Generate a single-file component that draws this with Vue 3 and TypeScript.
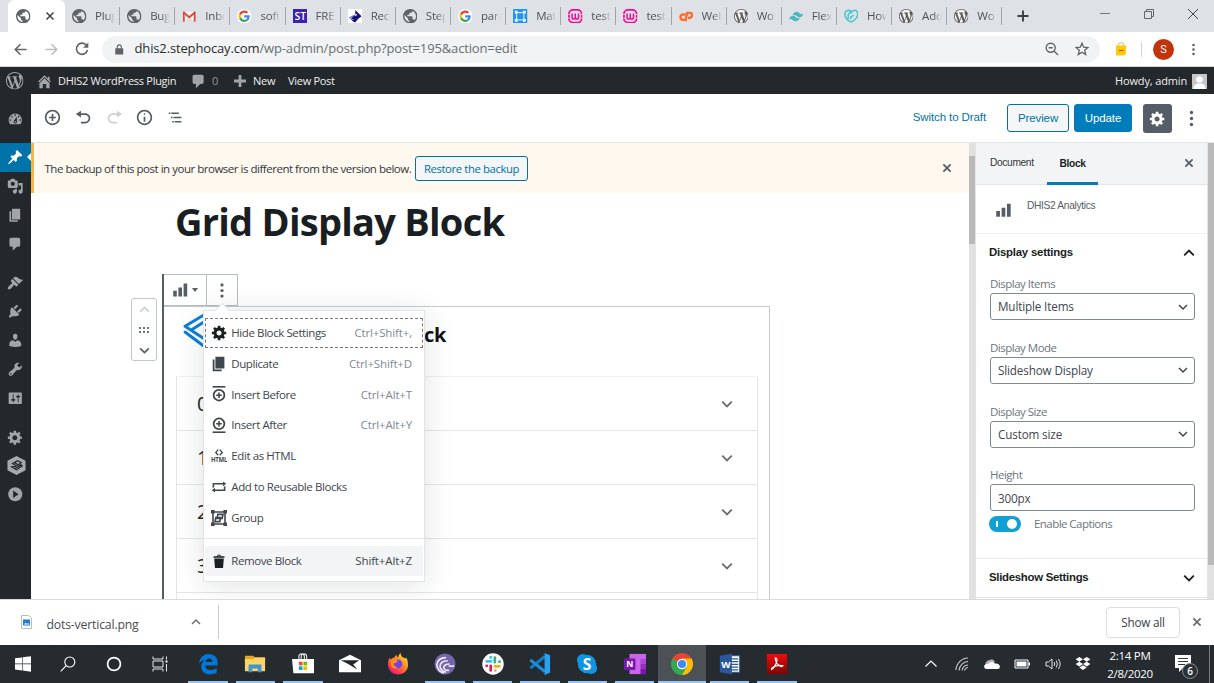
<script setup lang="ts">
interface Tab { icon: string; label: string }
interface MenuItem { icon: string; label: string; keys?: string; state?: string }

const tabs: Tab[] = [
  { icon: 'globe', label: 'Plugins' },
  { icon: 'globe', label: 'Bugs' },
  { icon: 'gmail', label: 'Inbox' },
  { icon: 'google', label: 'software' },
  { icon: 'st', label: 'FRE' },
  { icon: 'rec', label: 'Record' },
  { icon: 'globe', label: 'Stephocay' },
  { icon: 'google', label: 'parallax' },
  { icon: 'frame', label: 'Materials' },
  { icon: 'wamp', label: 'testing' },
  { icon: 'wamp', label: 'testing' },
  { icon: 'cpanel', label: 'Web' },
  { icon: 'wpgrey', label: 'Wo' },
  { icon: 'tailwind', label: 'Flex' },
  { icon: 'godaddy', label: 'How' },
  { icon: 'wpgrey', label: 'Adding' },
  { icon: 'wpgrey', label: 'Wo' },
]

const sideGroups: string[][] = [
  ['dashboard'],
  ['pin', 'media', 'pages', 'comment'],
  ['brush', 'plug', 'user', 'wrench', 'sliders'],
  ['gear', 'hex', 'play'],
]

const menu: MenuItem[] = [
  { icon: 'gear', label: 'Hide Block Settings', keys: 'Ctrl+Shift+,', state: 'focus' },
  { icon: 'pages', label: 'Duplicate', keys: 'Ctrl+Shift+D' },
  { icon: 'before', label: 'Insert Before', keys: 'Ctrl+Alt+T' },
  { icon: 'after', label: 'Insert After', keys: 'Ctrl+Alt+Y' },
  { icon: 'html', label: 'Edit as HTML' },
  { icon: 'repeat', label: 'Add to Reusable Blocks' },
  { icon: 'group', label: 'Group' },
]

const fields = [
  { label: 'Display Items', value: 'Multiple Items', select: true },
  { label: 'Display Mode', value: 'Slideshow Display', select: true },
  { label: 'Display Size', value: 'Custom size', select: true },
  { label: 'Height', value: '300px', select: false },
]

const system = ['windows', 'search', 'cortana', 'taskview']
const apps = [
  { icon: 'edge', open: true }, { icon: 'folder', open: true }, { icon: 'store', open: true },
  { icon: 'mail', open: false }, { icon: 'firefox', open: false }, { icon: 'torrent', open: true },
  { icon: 'slack', open: true }, { icon: 'vscode', open: true }, { icon: 'skype', open: true },
  { icon: 'onenote', open: true }, { icon: 'chrome', open: true }, { icon: 'word', open: true },
  { icon: 'acrobat', open: true },
]
const tray = ['trayup', 'wifi', 'cloud', 'battery', 'volume', 'dropbox']
</script>

<template>
  <svg class="defs" aria-hidden="true">
    <symbol id="i-globe" viewBox="2 2 20 20"><path fill="#5f6368" d="M12 2C6.480 2 2 6.480 2 12s4.480 10 10 10 10-4.480 10-10S17.520 2 12 2zm-1 17.930c-3.950-.49-7-3.850-7-7.930 0-.62.080-1.210.21-1.790L9 15v1c0 1.100.9 2 2 2v1.930zm6.900-2.540c-.26-.81-1-1.390-1.900-1.390h-1v-3c0-.55-.45-1-1-1H8v-2h2c.55 0 1-.45 1-1V7h2c1.100 0 2-.9 2-2v-.41c2.930 1.190 5 4.060 5 7.410 0 2.080-.8 3.970-2.100 5.390z" /></symbol>
    <symbol id="i-gmail" viewBox="0 0 16 16"><path fill="#f6f3f2" d="M1 3h14v11H1z" /><path fill="#e0d9d8" d="M3 14l5-5 5 5z" /><path fill="#d54b3d" d="M1 3h2v11H1.500q-.5 0-.5-.5zM13 3h2v10.500q0 .5-.5.5H13z" /><path fill="none" stroke="#d54b3d" stroke-width="2.200" d="M1.500 3.500L8 9l6.500-5.500" /></symbol>
    <symbol id="i-google" viewBox="0 0 48 48"><circle cx="24" cy="24" r="24" fill="#fff" /><g transform="translate(5 5) scale(.79)"><path fill="#EA4335" d="M24 9.500c3.540 0 6.710 1.220 9.210 3.600l6.850-6.850C35.900 2.380 30.470 0 24 0 14.620 0 6.510 5.380 2.560 13.220l7.980 6.190C12.430 13.720 17.740 9.500 24 9.500z" /><path fill="#4285F4" d="M46.980 24.550c0-1.570-.15-3.090-.38-4.550H24v9.020h12.940c-.58 2.960-2.260 5.480-4.780 7.180l7.730 6c4.510-4.180 7.090-10.360 7.090-17.650z" /><path fill="#FBBC05" d="M10.530 28.590c-.48-1.450-.76-2.990-.76-4.590s.27-3.140.76-4.590l-7.980-6.190C.92 16.460 0 20.120 0 24s.92 7.540 2.560 10.780l7.970-6.190z" /><path fill="#34A853" d="M24 48c6.480 0 11.930-2.130 15.890-5.810l-7.730-6c-2.150 1.450-4.920 2.300-8.160 2.300-6.260 0-11.570-4.220-13.470-9.910l-7.980 6.190C6.510 42.620 14.620 48 24 48z" /></g></symbol>
    <symbol id="i-st" viewBox="0 0 16 16"><path fill="#3c20b4" d="M0 0h16v16H0z" /><text x="8" y="12.200" text-anchor="middle" font-family="Open Sans, sans-serif" font-size="11.500" font-weight="600" fill="#fff">ST</text></symbol>
    <symbol id="i-rec" viewBox="0 0 16 16"><path fill="#fff" d="M0 0h16v16H0z" /><path fill="#14147c" d="M8 1l7 7-4 3-3 4-4-2 3-2-4 1 3-5 2 0z" /><path fill="#7788aa" d="M1 9l5-2-2 3-2 1z" /><path fill="#fff" d="M9 5l1 2-3 1z" /></symbol>
    <symbol id="i-frame" viewBox="0 0 16 16"><rect width="16" height="16" rx="1" fill="#2196f3" /><path fill="none" stroke="#fff" d="M4 3v10M12 3v10M3 4h10M3 12h10" /><path fill="#fff" d="M2 2h3v3H2zM11 2h3v3h-3zM2 11h3v3H2zM11 11h3v3h-3z" /></symbol>
    <symbol id="i-wamp" viewBox="0 0 16 16"><g fill="none" stroke="#f70b95"><rect x="1" y="1" width="14" height="14" rx="4.500" stroke-width="2" /><path stroke-width="1.700" d="M4.500 5v4q0 2 1.800 2T8 9V5v4q0 2 1.800 2t1.800-2V5" /></g><path stroke="#dee1e6" d="M0 6h3M0 10h3M13 6h3M13 10h3" /></symbol>
    <symbol id="i-cpanel" viewBox="0 0 16 16"><g fill="none" stroke="#ff6c2c" stroke-width="2.700"><path d="M7 6H4.500q-2.500 0-2.800 2.800T4.300 12h1.500M7 13.500L9 4.300h3q3 .2 2.500 2.700T11.500 10H10" /></g></symbol>
    <symbol id="i-wp" viewBox="0 0 20 20"><path fill="currentColor" d="M20 10c0-5.510-4.490-10-10-10C4.480 0 0 4.490 0 10c0 5.520 4.480 10 10 10 5.510 0 10-4.480 10-10zM7.780 15.370L4.370 6.220c.55-.02 1.170-.08 1.170-.08.5-.06.44-1.130-.06-1.110 0 0-1.450.11-2.370.11-.18 0-.37 0-.58-.01C4.120 2.690 6.870 1.110 10 1.110c2.330 0 4.450.87 6.050 2.340-.68-.11-1.650.39-1.650 1.580 0 .74.450 1.360.9 2.100.35.610.55 1.360.55 2.460 0 1.490-1.400 5-1.400 5l-3.030-8.370c.54-.02.82-.17.82-.17.5-.05.44-1.250-.06-1.220 0 0-1.440.12-2.380.12-.87 0-2.330-.12-2.330-.12-.5-.03-.56 1.200-.06 1.220l.92.080 1.260 3.410zM17.410 10c.24-.64.74-1.870.43-4.250.7 1.290 1.050 2.710 1.050 4.250 0 3.290-1.730 6.240-4.400 7.780.97-2.590 1.940-5.200 2.920-7.780zM6.100 18.090C3.120 16.650 1.110 13.530 1.110 10c0-1.300.23-2.480.72-3.590C3.250 10.300 4.670 14.200 6.100 18.090zm4.030-6.630l2.580 6.980c-.86.290-1.760.45-2.710.45-.79 0-1.570-.11-2.290-.33.81-2.380 1.620-4.740 2.420-7.100z" /></symbol>
    <symbol id="i-wpgrey" viewBox="0 0 20 20"><circle cx="10" cy="10" r="9.500" fill="#f2f2f2" /><use href="#i-wp" color="#5a5a58" /></symbol>
    <symbol id="i-tailwind" viewBox="0 0 16 16"><path fill="#4bb8bd" d="M4 7q1-4 4.500-4 2 0 3.500 2 1.500 1.500 4 0-1 4-4.500 4-2 0-3.500-1.500T4 7zM0 11.500q1-4 4.500-4 2 0 3.500 2 1.500 1.500 4 0-1 4-4.500 4-2 0-3.500-1.500t-4-.5z" /></symbol>
    <symbol id="i-godaddy" viewBox="0 0 16 16"><g fill="none" stroke="#4cc5cc" stroke-width="1.700"><path d="M8 14.500Q1 11 1 6.500T5 1.500q3 0 3.500 3.500M5 11q-1.500-5 2-7.500t6-2q2.500 1.500 2 5.500T8 14.500M7.500 11V8.500L11 7" /></g></symbol>

    <symbol id="i-dashboard" viewBox="0 0 20 20"><path fill="currentColor" d="M3.760 16h12.480c1.100-1.370 1.760-3.110 1.760-5 0-4.420-3.580-8-8-8s-8 3.580-8 8c0 1.890.66 3.630 1.760 5zM10 4c.55 0 1 .45 1 1s-.45 1-1 1-1-.45-1-1 .45-1 1-1zM6 6c.55 0 1 .45 1 1s-.45 1-1 1-1-.45-1-1 .45-1 1-1zm8 0c.55 0 1 .45 1 1s-.45 1-1 1-1-.45-1-1 .45-1 1-1zm-5.370 5.550L12 7v6c0 1.100-.9 2-2 2s-2-.9-2-2c0-.57.24-1.080.63-1.450zM4 10c.55 0 1 .45 1 1s-.45 1-1 1-1-.45-1-1 .45-1 1-1zm12 0c.55 0 1 .45 1 1s-.45 1-1 1-1-.45-1-1 .45-1 1-1zm-5 3c0-.55-.45-1-1-1s-1 .45-1 1 .45 1 1 1 1-.45 1-1z" /></symbol>
    <symbol id="i-pin" viewBox="0 0 20 20"><path fill="currentColor" d="M10.440 3.020l1.820-1.820 6.360 6.350-1.830 1.820c-1.050-.68-2.480-.57-3.410.36l-.75.75c-.92.930-1.040 2.350-.35 3.410l-1.830 1.820-2.410-2.410-2.800 2.790c-.42.420-3.380 2.710-3.800 2.290s1.860-3.390 2.280-3.810l2.790-2.790L4.100 9.360l1.830-1.820c1.050.69 2.480.57 3.400-.36l.75-.75c.93-.92 1.050-2.350.36-3.410z" /></symbol>
    <symbol id="i-media" viewBox="0 0 20 20"><path fill="currentColor" d="M13 11V4c0-.55-.45-1-1-1h-1.670L9 1H5L3.670 3H2c-.55 0-1 .45-1 1v7c0 .55.450 1 1 1h10c.55 0 1-.45 1-1zM7 4.500c1.380 0 2.500 1.120 2.500 2.500S8.380 9.500 7 9.500 4.500 8.380 4.500 7 5.620 4.500 7 4.500zM14 6h5v10.500c0 1.380-1.120 2.500-2.500 2.500S14 17.880 14 16.500s1.120-2.500 2.500-2.500c.17 0 .34.020.5.050V9h-3V6zm-4 8.050V13h2v3.500c0 1.380-1.120 2.500-2.500 2.500S7 17.880 7 16.500 8.120 14 9.500 14c.17 0 .34.020.5.050z" /></symbol>
    <symbol id="i-pages" viewBox="0 0 20 20"><path fill="currentColor" d="M6 15V2h10v13H6zm-1 1h8v2H3V5h2v11z" /></symbol>
    <symbol id="i-comment" viewBox="0 0 20 20"><path fill="currentColor" d="M5 2h9c1.100 0 2 .9 2 2v7c0 1.100-.9 2-2 2h-2l-5 5v-5H5c-1.100 0-2-.9-2-2V4c0-1.100.9-2 2-2z" /></symbol>
    <symbol id="i-brush" viewBox="0 0 20 20"><path fill="currentColor" d="M14.480 11.060L7.410 3.990l1.500-1.500c.5-.56 2.300-.47 3.510.32 1.210.8 1.430 1.280 2.910 2.100 1.180.64 2.450 1.260 4.450.85zm-.71.710L6.700 4.700 4.930 6.470c-.39.390-.39 1.020 0 1.410l1.060 1.060c.39.390.39 1.030 0 1.420-.6.600-1.430 1.110-2.210 1.690-.35.260-.7.530-1.010.84C1.430 14.230.4 16.080 1.400 17.070c.99 1 2.840-.03 4.180-1.360.31-.31.58-.66.85-1.020.57-.78 1.080-1.610 1.690-2.210.39-.39 1.020-.39 1.410 0l1.060 1.060c.39.390 1.020.39 1.410 0z" /></symbol>
    <symbol id="i-plug" viewBox="0 0 20 20"><path fill="currentColor" d="M13.110 4.360L9.870 7.600 8 5.730l3.240-3.240c.35-.34 1.050-.2 1.560.32.52.51.66 1.210.31 1.550zm-8 1.770l.91-1.120 9.010 9.010-1.190.84c-.71.710-2.630 1.160-3.820 1.160H6.140L4.900 17.260c-.59.590-1.540.59-2.120 0-.59-.58-.59-1.530 0-2.120l1.240-1.240v-3.880c0-1.130.4-3.190 1.090-3.890zm7.260 3.970l3.240-3.240c.34-.35 1.040-.21 1.550.31.52.51.66 1.210.31 1.550l-3.240 3.250z" /></symbol>
    <symbol id="i-user" viewBox="0 0 20 20"><path fill="currentColor" d="M10 9.250c-2.270 0-2.730-3.440-2.730-3.440C7 4.020 7.820 2 9.970 2c2.160 0 2.980 2.020 2.710 3.810 0 0-.41 3.440-2.680 3.440zm0 2.570L12.720 10c2.390 0 4.520 2.330 4.520 4.530v2.490s-3.650 1.130-7.240 1.130c-3.650 0-7.240-1.130-7.240-1.130v-2.490c0-2.250 1.940-4.480 4.470-4.480z" /></symbol>
    <symbol id="i-wrench" viewBox="0 0 20 20"><path fill="currentColor" d="M16.680 9.770c-1.340 1.340-3.300 1.670-4.950.99l-5.410 6.520c-.99.990-2.590.99-3.580 0s-.99-2.590 0-3.570l6.520-5.420c-.68-1.650-.35-3.610.99-4.950 1.280-1.280 3.120-1.620 4.720-1.060l-2.890 2.890 2.820 2.820 2.860-2.870c.53 1.580.18 3.390-1.080 4.650zM3.810 16.210c.4.390 1.040.39 1.430 0 .4-.4.4-1.040 0-1.430-.39-.4-1.030-.4-1.430 0-.39.390-.39 1.030 0 1.430z" /></symbol>
    <symbol id="i-sliders" viewBox="0 0 20 20"><path fill="currentColor" d="M18 16V4c0-.55-.45-1-1-1H3c-.55 0-1 .45-1 1v12c0 .55.450 1 1 1h14c.55 0 1-.45 1-1zM8 11h1c.55 0 1 .45 1 1s-.45 1-1 1H8v1.500c0 .28-.22.500-.5.500s-.5-.22-.5-.5V13H6c-.55 0-1-.45-1-1s.45-1 1-1h1V5.500c0-.28.22-.5.5-.5s.5.220.5.500V11zm5-2h-1c-.55 0-1-.45-1-1s.45-1 1-1h1V5.500c0-.28.22-.5.5-.5s.5.220.5.500V7h1c.55 0 1 .45 1 1s-.45 1-1 1h-1v5.500c0 .28-.22.500-.5.500s-.5-.22-.5-.5V9z" /></symbol>
    <symbol id="i-gear" viewBox="0 0 20 20"><path fill="currentColor" d="M18 12h-2.180c-.17.700-.44 1.350-.81 1.930l1.540 1.540-2.100 2.100-1.540-1.540c-.58.360-1.230.63-1.910.79V19H8v-2.180c-.68-.16-1.330-.43-1.910-.79l-1.540 1.540-2.120-2.120 1.540-1.540c-.36-.58-.63-1.230-.79-1.910H1V9.030h2.170c.16-.7.44-1.350.8-1.940L2.430 5.550l2.100-2.100 1.540 1.540c.58-.37 1.240-.64 1.930-.81V2h3v2.180c.68.160 1.330.43 1.910.79l1.540-1.540 2.120 2.120-1.540 1.540c.36.590.64 1.240.8 1.940H18V12zm-8.500 1.500c1.660 0 3-1.340 3-3s-1.340-3-3-3-3 1.340-3 3 1.340 3 3 3z" /></symbol>
    <symbol id="i-hex" viewBox="0 0 20 20"><path fill="#a7aaad" d="M10 0l9.500 5v10L10 20 .5 15V5z" /><path fill="none" stroke="#23282d" stroke-width="1.300" d="M5 8.500l6-3.500 4 2-6 4-4 .5 5 3 6-4-2-2M6 8l4 2.500M8 7l5 3M8 13.500l7-4" /></symbol>
    <symbol id="i-play" viewBox="0 0 20 20"><circle cx="10" cy="10" r="8.500" fill="currentColor" /><path fill="#23282d" d="M7.500 5.500l6.500 4.500-6.500 4.500z" /></symbol>
    <symbol id="i-home" viewBox="0 0 20 20"><path fill="currentColor" d="M16 8.500l1.530 1.530-1.060 1.060L10 4.600l-6.470 6.490-1.060-1.060L10 2.500l4 4v-2h2v4zm-6-2.460l6 5.990V18h-4v-5H8v5H4v-5.970z" /></symbol>
    <symbol id="i-insert" viewBox="0 0 20 20"><path fill="currentColor" d="M10 1c-5 0-9 4-9 9s4 9 9 9 9-4 9-9-4-9-9-9zm0 16c-3.900 0-7-3.100-7-7s3.100-7 7-7 7 3.100 7 7-3.100 7-7 7zm1-11H9v3H6v2h3v3h2v-3h3V9h-3V6z" /></symbol>
    <symbol id="i-undo" viewBox="0 0 20 20"><path fill="currentColor" d="M12 5H7V2L1 6l6 4V7h5c2.200 0 4 1.800 4 4s-1.800 4-4 4H7v2h5c3.300 0 6-2.700 6-6s-2.700-6-6-6z" /></symbol>
    <symbol id="i-redo" viewBox="0 0 20 20"><path fill="currentColor" d="M8 5h5V2l6 4-6 4V7H8c-2.200 0-4 1.800-4 4s1.800 4 4 4h5v2H8c-3.300 0-6-2.700-6-6s2.700-6 6-6z" /></symbol>
    <symbol id="i-info" viewBox="0 0 20 20"><path fill="currentColor" d="M9 15h2V9H9v6zm1-10c-.5 0-1 .5-1 1s.5 1 1 1 1-.5 1-1-.5-1-1-1zm0-4c-5 0-9 4-9 9s4 9 9 9 9-4 9-9-4-9-9-9zm0 16c-3.900 0-7-3.100-7-7s3.100-7 7-7 7 3.100 7 7-3.100 7-7 7z" /></symbol>
    <symbol id="i-list" viewBox="0 0 20 20"><path fill="currentColor" d="M2 4h2v2H2zM5 4h9v2H5zM4.500 9h2v2h-2zM7.500 9H17v2H7.500zM6 14h2v2H6zM9 14h8v2H9z" /></symbol>
    <symbol id="i-before" viewBox="0 0 20 20"><path fill="currentColor" d="M2 0h16v2H2z" /><circle cx="10" cy="11.500" r="6.700" fill="none" stroke="currentColor" stroke-width="2.200" /><path fill="currentColor" d="M9 8h2v7H9zM6.500 10.500h7v2h-7z" /></symbol>
    <symbol id="i-after" viewBox="0 0 20 20"><path fill="currentColor" d="M2 18h16v2H2z" /><circle cx="10" cy="8.500" r="6.700" fill="none" stroke="currentColor" stroke-width="2.200" /><path fill="currentColor" d="M9 5h2v7H9zM6.500 7.500h7v2h-7z" /></symbol>
    <symbol id="i-html" viewBox="0 0 20 20"><path fill="none" stroke="currentColor" stroke-width="1.700" d="M9 2L6 5.500 9 9M11 2l3 3.500L11 9" /><text x="10" y="18" text-anchor="middle" textLength="20" lengthAdjust="spacingAndGlyphs" font-family="Open Sans, sans-serif" font-size="8.500" font-weight="700" fill="currentColor">HTML</text></symbol>
    <symbol id="i-repeat" viewBox="0 0 20 20"><path fill="currentColor" d="M4 7v3l-2 1.500V5h13V3l4 3-4 3V7zM16 13v-3l2-1.500V15H5v2l-4-3 4-3v2z" /></symbol>
    <symbol id="i-group" viewBox="0 0 20 20"><g fill="none" stroke="currentColor"><path stroke-width="2" d="M2.500 2.500h15v15h-15z" /><path stroke-width="2" d="M8.500 5.500h6.500l-1 5H7.500zM6 9.500h6l-1 5H5z" /></g><path fill="currentColor" d="M0 0h4.500v4.500H0zM15.500 0H20v4.500h-4.500zM0 15.500h4.500V20H0zM15.500 15.500H20V20h-4.500z" /></symbol>
    <symbol id="i-trash" viewBox="0 0 20 20"><path fill="currentColor" d="M12.500 4h3.500c.6 0 1 .4 1 1v1H3V5c0-.6.5-1 1-1h3.500c.2-1.100 1.300-2 2.500-2s2.300.9 2.500 2zM8.500 4h3c-.2-.6-.9-1-1.500-1s-1.300.4-1.500 1zM4 7h12l-.9 11c0 .5-.5.9-1 .9H5.900c-.5 0-.9-.4-1-.9z" /></symbol>
    <symbol id="i-bars" viewBox="0 0 20 20"><path fill="currentColor" d="M1.500 11H6v7H1.500zM8 7h4.500v11H8zM14.500 2H19v16h-4.500z" /></symbol>
    <symbol id="i-dots" viewBox="0 0 20 20"><g fill="currentColor"><circle cx="10" cy="3" r="2" /><circle cx="10" cy="10" r="2" /><circle cx="10" cy="17" r="2" /></g></symbol>
    <symbol id="i-x" viewBox="0 0 20 20"><path fill="none" stroke="currentColor" stroke-width="3" d="M4 4l12 12M16 4L4 16" /></symbol>
    <symbol id="i-xthin" viewBox="0 0 20 20"><path fill="none" stroke="currentColor" stroke-width="3" d="M3 3l14 14M17 3L3 17" /></symbol>
    <symbol id="i-down" viewBox="0 0 20 20"><path fill="none" stroke="currentColor" stroke-width="3" d="M2 6l8 8 8-8" /></symbol>
    <symbol id="i-up" viewBox="0 0 20 20"><path fill="none" stroke="currentColor" stroke-width="3" d="M2 14l8-8 8 8" /></symbol>

    <symbol id="i-windows" viewBox="0 0 16 16"><path fill="#fff" d="M0 2.300l7-.9v6.200H0zM7.600 1.300L16 .2v7.400H7.600zM0 8.300h7v6.200l-7-.9zM7.600 8.300H16v7.500l-8.400-1.200z" /></symbol>
    <symbol id="i-search" viewBox="0 0 16 16"><path fill="none" stroke="#fff" stroke-width="1.100" d="M6.200 9.700L.7 15.300" /><circle cx="9.800" cy="6" r="5" fill="none" stroke="#fff" stroke-width="1.100" /></symbol>
    <symbol id="i-cortana" viewBox="0 0 16 16"><circle cx="8" cy="8" r="6.400" fill="none" stroke="#fff" stroke-width="1.700" /></symbol>
    <symbol id="i-taskview" viewBox="0 0 16 16"><g fill="none" stroke="#e8e8e8" stroke-width="1"><path d="M1 .5v2.500h10V.5M1 15.500V13h10v2.500M1 5h10v6H1zM14.500 .5v3M14.500 8v7.500" /></g><path fill="#fff" d="M13.500 4.500h2v2h-2z" /></symbol>
    <symbol id="i-edge" viewBox="0 0 24 24"><path fill="#0078d7" d="M2 11Q4 1 13 1q9.500.5 9.500 9.500v3H9q.5 5 6 5 3.500 0 6.500-2v5Q18 23.500 14 23.500 5 23 4.500 15 4.700 10 9 7.500 5 8 2 11zm7.300-1.300H17Q16.500 6 13 6q-3 .3-3.700 3.700z" /></symbol>
    <symbol id="i-folder" viewBox="0 0 24 24"><path fill="#e6a522" d="M1 3h9l2 2h11v4H1z" /><path fill="#ffd466" d="M1 6.500h9L12 5h11v15H1z" /><path fill="#3f96d5" d="M5 12.500h14V21h-4v-4H9v4H5z" /></symbol>
    <symbol id="i-store" viewBox="0 0 24 24"><path fill="none" stroke="#ddd" stroke-width="1.300" d="M7.500 7V4q0-3 3-3t3 3v3M10 7V4q0-3 3-3t3 3v3" /><path fill="#fff" d="M0 6.500h24V22H1.500z" /><path fill="#f25022" d="M7.500 9.500h4v4h-4z" /><path fill="#7fba00" d="M12.500 9.500h4v4h-4z" /><path fill="#00a4ef" d="M7.500 14.500h4v4h-4z" /><path fill="#ffb900" d="M12.500 14.500h4v4h-4z" /></symbol>
    <symbol id="i-mail" viewBox="0 0 24 24"><path fill="#fff" d="M0 8l12-6 12 6v13H0z" /><path fill="#20262a" d="M2 8h20l-6.500 4.500L20 18 9.500 11.700z" /></symbol>
    <symbol id="i-firefox" viewBox="0 0 24 24"><defs><linearGradient id="ffg" x1="1" y1="0" x2=".2" y2="1"><stop offset="0" stop-color="#fff04a" /><stop offset=".4" stop-color="#ff9a1f" /><stop offset=".8" stop-color="#ff3653" /><stop offset="1" stop-color="#e3138b" /></linearGradient></defs><path fill="url(#ffg)" d="M3 5l1 2q2-2 4-2l2-3q.5 2 2 3l1-3 2-2q0 4 3 5l2 1 1-1q2.500 4 2 9-1 9-11 9.500Q2 22.500 1 13 .8 8 3 5z" /><circle cx="12" cy="12" r="4.800" fill="#7542e5" /><path fill="#ff8f1c" d="M4 8l4-1.500 4 2-2 2-3 1q1 4 5 4.500-5 2.500-8-2z" /></symbol>
    <symbol id="i-torrent" viewBox="0 0 24 24"><circle cx="12" cy="12" r="11.500" fill="#7566ac" /><g fill="none" stroke="#eeeaf8" stroke-width="1.800"><path d="M13 5Q4 5 3 13q1 7 8 9M15 8.500q-8 0-8.500 6 .5 5 7 6.500M17 12q-6 0-6.500 4 1 3 6 3M22 14q-3 1-6 0" /></g></symbol>
    <symbol id="i-slack" viewBox="0 0 24 24"><circle cx="12" cy="12" r="11.700" fill="#fff" /><g fill="none" stroke-width="3" stroke-linecap="round"><path stroke="#36c5f0" d="M5 9h5M9.500 4.500V5" /><path stroke="#2eb67d" d="M14 5v5M19 9.500h.2" /><path stroke="#ecb22e" d="M14 14.500h5M14.500 19v.2" /><path stroke="#e01e5a" d="M9.500 14v5M5 14h.2" /></g></symbol>
    <symbol id="i-vscode" viewBox="0 0 24 24"><path fill="none" stroke="#1579c0" stroke-width="3.500" d="M1.500 16.500L17.500 3.500" /><path fill="none" stroke="#1c8ddb" stroke-width="3.500" d="M1.500 7.500l16 13" /><path fill="#29a1ee" d="M17 0l6 2.500v19L17 24z" /></symbol>
    <symbol id="i-skype" viewBox="0 0 24 24"><g fill="#0f95e2"><circle cx="12" cy="12" r="10" /><circle cx="7.500" cy="7.500" r="6.500" /><circle cx="16.500" cy="16.500" r="6.500" /></g><text x="12" y="18" text-anchor="middle" font-family="Open Sans, sans-serif" font-size="17" font-weight="700" fill="#fff">S</text></symbol>
    <symbol id="i-onenote" viewBox="0 0 24 24"><path fill="#ca64ea" d="M6 1h18v22H6z" /><path fill="#ae4bd5" d="M18 6.500h6V12h-6z" /><path fill="#9332bf" d="M18 12h6v5.500h-6z" /><path fill="#7719aa" d="M18 17.500h6V23h-6z" /><rect y="6" width="12.500" height="12.500" rx="1" fill="#7719aa" /><text x="6.200" y="15.700" text-anchor="middle" font-family="Open Sans, sans-serif" font-size="9.500" font-weight="700" fill="#fff">N</text></symbol>
    <symbol id="i-chrome" viewBox="0 0 24 24"><path fill="#ea4335" d="M12 12L1.600 6A12 12 0 0 1 22.400 6z" /><path fill="#fbbc05" d="M12 12V6h10.400A12 12 0 0 1 12 24z" /><path fill="#34a853" d="M1.600 6A12 12 0 0 0 12 24l5.200-9H12z" /><path fill="#ea4335" d="M1.600 6L12 6v6l-5.200 3z" /><path fill="#34a853" d="M1.600 6l5.200 9 5.200-3z" /><circle cx="12" cy="12" r="5.600" fill="#fff" /><circle cx="12" cy="12" r="4.400" fill="#4285f4" /></symbol>
    <symbol id="i-word" viewBox="0 0 24 24"><path fill="#fff" stroke="#2b579a" d="M12 3h10.500v18H12z" /><path stroke="#2b579a" stroke-width="1.400" d="M13 6.500h8M13 9.500h8M13 12.500h8M13 15.500h8M13 18.500h8" /><path fill="#2b579a" d="M1 3l13-2.500v23L1 21z" /><text x="7.500" y="16" text-anchor="middle" font-family="Open Sans, sans-serif" font-size="10.500" font-weight="700" fill="#fff">W</text></symbol>
    <symbol id="i-acrobat" viewBox="0 0 24 24"><defs><linearGradient id="acg" x1="0" y1="0" x2="0" y2="1"><stop offset="0" stop-color="#f20a0a" /><stop offset="1" stop-color="#7d0505" /></linearGradient></defs><path fill="url(#acg)" d="M1 1h22v22H1z" /><path fill="none" stroke="#fff" stroke-width="1.300" d="M11 5.500q2 1 0 6T6 18q-.5-2 4-3.500t8.500-.5q-1 2-4.500-.5t-4-8z" /></symbol>

    <symbol id="i-trayup" viewBox="0 0 16 16"><path fill="none" stroke="#fff" stroke-width="1.200" d="M2.500 10.500L8 5l5.500 5.500" /></symbol>
    <symbol id="i-wifi" viewBox="0 0 16 16"><g fill="none" stroke="#c9cbcc" stroke-width="1.100"><path d="M2 14A12.500 12.500 0 0 1 14 2M5 14.500A9.500 9.500 0 0 1 14 5.500M8 14.500A6.500 6.500 0 0 1 14 9M10.500 14.500Q11 12 14 11.500" /></g></symbol>
    <symbol id="i-cloud" viewBox="0 0 16 16"><path fill="#aeb1b3" d="M1 9q1-5 5-5 3-2 5 2l-3 2z" /><path fill="#fff" d="M2 13q-2-.5-2-3Q1 7.500 4 8q3-3.500 7-.5 4-.5 5 3 0 2-2 2.500z" /></symbol>
    <symbol id="i-battery" viewBox="0 0 16 16"><path fill="#fff" d="M2.500 5.500h10v5h-10z" /><path fill="none" stroke="#fff" d="M1 4h13v8H1z" /><path fill="#fff" d="M14.500 6.500H16v3h-1.500z" /></symbol>
    <symbol id="i-volume" viewBox="0 0 16 16"><g fill="none" stroke="#e4e5e6" stroke-width="1"><path d="M1 6h2.500L7 3v10l-3.500-3H1zM9 6q1.500 2 0 4M11.200 4.500q2.500 3.500 0 7M13.400 3q3.500 5 0 10" /></g></symbol>
    <symbol id="i-dropbox" viewBox="0 0 16 16"><path fill="#fff" d="M4.300 1l3.700 2.300-3.700 2.400L.6 3.300zM11.700 1l3.700 2.300-3.700 2.400L8 3.300zM.6 8l3.700-2.300L8 8l-3.700 2.400zM11.700 5.700L15.400 8l-3.700 2.400L8 8zM4.300 11.600L8 9.300l3.700 2.300L8 14z" /></symbol>
  </svg>

  <div class="screen">
    <header class="tabs">
      <div class="tab-active">
        <svg class="fav"><use href="#i-globe" /></svg>
        <svg class="tab-x"><use href="#i-xthin" /></svg>
      </div>
      <div v-for="(t, i) in tabs" :key="i" class="tab">
        <svg class="fav"><use :href="'#i-' + t.icon" /></svg>
        <span class="tab-label">{{ t.label }}</span>
      </div>
      <svg class="newtab" viewBox="0 0 12 12"><path d="M6 .5v11M.5 6h11" stroke="#3c4043" stroke-width="1.900" /></svg>
      <div class="winbtns">
        <svg viewBox="0 0 12 12"><path d="M1 5.500h10" stroke="#777" fill="none" /></svg>
        <svg viewBox="0 0 12 12"><path d="M1.500 3.500h7v7h-7zM3.500 3.500v-2h7v7h-2" stroke="#666" fill="none" /></svg>
        <svg viewBox="0 0 12 12"><path d="M1 1l10 10M11 1L1 11" stroke="#444" fill="none" /></svg>
      </div>
    </header>

    <div class="toolbar">
      <svg class="nav back" viewBox="0 0 14 14"><path d="M13.500 7H1.500M7 1.300L1.300 7 7 12.700" /></svg>
      <svg class="nav fwd" viewBox="0 0 14 14"><path d="M.5 7h12M7 1.300L12.700 7 7 12.700" /></svg>
      <svg class="nav reload" viewBox="0 0 14 14"><path d="M11.500 3.300A5.600 5.600 0 1 0 12.500 8" /><path class="solid" d="M13.300.6v5.200H8.100z" /></svg>
      <div class="omnibox">
        <svg class="lock" viewBox="0 0 10 12"><path fill="#5f6368" d="M1 4.500h8q.7 0 .7.700v6q0 .7-.7.700H1q-.7 0-.7-.7v-6q0-.7.700-.7z" /><path fill="none" stroke="#5f6368" stroke-width="1.300" d="M2.600 5V3a2.400 2.400 0 0 1 4.800 0v2" /></svg>
        <span class="url"><b>dhis2.stephocay.com</b>/wp-admin/post.php?post=195&amp;action=edit</span>
        <svg class="omni-ic" viewBox="0 0 14 14"><g fill="none" stroke="#5f6368" stroke-width="1.400"><circle cx="5.700" cy="5.700" r="4.500" /><path d="M9 9l4 4M3.700 5.700h4" /></g></svg>
        <svg class="omni-ic" viewBox="0 0 14 14"><path fill="none" stroke="#5f6368" stroke-width="1.300" d="M7 1.200l1.700 4 4.300.3-3.300 2.800 1 4.200L7 10.200l-3.700 2.300 1-4.200L1 5.500l4.300-.3z" /></svg>
      </div>
      <svg class="bag" viewBox="0 0 12 14"><path fill="none" stroke="#d8c27a" d="M3 4q0-3.500 3-3.500T9 4" /><path fill="#fbcb0a" d="M1 3.500h10v8L9 13.500H1z" /><path stroke="#e0402a" stroke-width="1.200" d="M4 8.500h4.500" /></svg>
      <span class="tb-sep"></span>
      <span class="profile">S</span>
      <svg class="kebab"><use href="#i-dots" /></svg>
    </div>

    <div class="adminbar">
      <svg class="ab-wp"><use href="#i-wp" /></svg>
      <svg class="ab-home"><use href="#i-home" /></svg>
      <span class="ab-site">DHIS2 WordPress Plugin</span>
      <svg class="ab-com"><use href="#i-comment" /></svg>
      <span class="ab-zero">0</span>
      <svg class="ab-plus" viewBox="0 0 12 12"><path d="M6 0v12M0 6h12" stroke="#a0a5aa" stroke-width="2.800" /></svg>
      <span class="ab-new">New</span>
      <span class="ab-view">View Post</span>
      <span class="ab-user">Howdy, admin</span>
      <svg class="ab-avatar" viewBox="0 0 15 15"><path fill="#c6c6c6" d="M0 0h15v15H0z" /><circle cx="7.500" cy="5.500" r="3.300" fill="#fff" /><path fill="#fff" d="M1.500 15q0-5 4-5.500h4q4 .5 4 5.500z" /></svg>
    </div>

    <div class="workspace">
      <nav class="side">
        <div v-for="(g, gi) in sideGroups" :key="gi" class="side-group">
          <span v-for="n in g" :key="n" class="side-item" :class="[n, { on: n === 'pin' }]">
            <svg><use :href="'#i-' + n" /></svg>
          </span>
        </div>
      </nav>

      <div class="editor">
        <div class="ed-head">
          <svg class="h-ic"><use href="#i-insert" /></svg>
          <svg class="h-ic"><use href="#i-undo" /></svg>
          <svg class="h-ic dim"><use href="#i-redo" /></svg>
          <svg class="h-ic"><use href="#i-info" /></svg>
          <svg class="h-ic"><use href="#i-list" /></svg>
          <span class="draft">Switch to Draft</span>
          <span class="btn preview">Preview</span>
          <span class="btn update">Update</span>
          <span class="gearbtn"><svg><use href="#i-gear" /></svg></span>
          <svg class="h-dots"><use href="#i-dots" /></svg>
        </div>

        <div class="ed-body">
          <main class="canvas">
            <div class="notice">
              <span class="notice-text">The backup of this post in your browser is different from the version below.</span>
              <span class="restore">Restore the backup</span>
              <svg class="notice-x"><use href="#i-x" /></svg>
            </div>
            <h1 class="title">Grid Display Block</h1>

            <section class="block">
              <div class="mover">
                <svg class="mv-up"><use href="#i-up" /></svg>
                <svg class="mv-grip" viewBox="0 0 10 6"><g fill="#6c7781"><path d="M0 0h2v2H0zM4 0h2v2H4zM8 0h2v2H8zM0 4h2v2H0zM4 4h2v2H4zM8 4h2v2H8z" /></g></svg>
                <svg class="mv-down"><use href="#i-down" /></svg>
              </div>
              <div class="b-tools">
                <span class="b-type"><svg class="b-bars"><use href="#i-bars" /></svg><i class="caret"></i></span>
                <span class="b-more"><svg><use href="#i-dots" /></svg></span>
              </div>
              <div class="b-box">
                <div class="b-head">
                  <svg class="b-logo" viewBox="0 0 40 34"><g fill="none" stroke="#0a80d8" stroke-width="2.900" stroke-linejoin="round" stroke-linecap="round"><path d="M20 1.500L2 12.300 20 24l18-11.700zM9.500 15.200L20 8.500l10.500 6.700M2 18l18 13.500L38 18" /></g></svg>
                  <strong class="b-title">Grid Display Block</strong>
                </div>
                <div class="acc">
                  <div v-for="n in 5" :key="n" class="acc-row">
                    <span>{{ n - 1 }}</span>
                    <svg><use href="#i-down" /></svg>
                  </div>
                </div>
              </div>

              <div class="menu">
                <div v-for="m in menu" :key="m.label" class="m-item" :class="m.state">
                  <svg :class="'mi-' + m.icon"><use :href="'#i-' + m.icon" /></svg>
                  <span>{{ m.label }}</span>
                  <kbd v-if="m.keys">{{ m.keys }}</kbd>
                </div>
                <div class="m-rule"></div>
                <div class="m-item hover">
                  <svg><use href="#i-trash" /></svg>
                  <span>Remove Block</span>
                  <kbd>Shift+Alt+Z</kbd>
                </div>
              </div>
            </section>
          </main>

          <div class="scroll main-scroll"><i></i></div>

          <aside class="panel">
            <div class="p-tabs">
              <span class="p-doc">Document</span>
              <span class="p-block">Block</span>
              <svg class="p-x"><use href="#i-x" /></svg>
            </div>
            <div class="p-card">
              <svg><use href="#i-bars" /></svg>
              <span>DHIS2 Analytics</span>
            </div>
            <div class="p-settings">
              <div class="p-title"><span>Display settings</span><svg><use href="#i-up" /></svg></div>
              <div v-for="f in fields" :key="f.label" class="field">
                <label>{{ f.label }}</label>
                <div class="ctl"><span>{{ f.value }}</span><svg v-if="f.select"><use href="#i-down" /></svg></div>
              </div>
              <div class="toggle-row">
                <span class="toggle"><i></i><b></b></span>
                <span class="t-label">Enable Captions</span>
              </div>
            </div>
            <div class="p-title last"><span>Slideshow Settings</span><svg><use href="#i-down" /></svg></div>
          </aside>

          <div class="scroll page-scroll"><i></i></div>
        </div>
      </div>
    </div>

    <div class="downloads">
      <svg class="d-file" viewBox="0 0 11 14"><path fill="#fff" stroke="#aaa" stroke-width=".8" d="M.5.500h7L10.500 3v10.500H.5z" /><path fill="#1e7bd0" d="M2 4.500h7v6H2z" /><path fill="#fff" d="M3 9.500l1.500-2L6 9l1-1 1.500 1.500z" /></svg>
      <span class="d-name">dots-vertical.png</span>
      <svg class="d-up"><use href="#i-up" /></svg>
      <span class="d-sep"></span>
      <span class="d-show">Show all</span>
      <svg class="d-x"><use href="#i-x" /></svg>
    </div>

    <footer class="taskbar">
      <span v-for="s in system" :key="s" class="t-sys"><svg><use :href="'#i-' + s" /></svg></span>
      <div class="t-apps">
        <span v-for="a in apps" :key="a.icon" class="t-app" :class="{ open: a.open, cur: a.icon === 'chrome' }"><svg><use :href="'#i-' + a.icon" /></svg></span>
      </div>
      <div class="tray">
        <span v-for="s in tray" :key="s"><svg><use :href="'#i-' + s" /></svg></span>
      </div>
      <div class="clock"><span>2:14 PM</span><span>2/8/2020</span></div>
      <div class="notif">
        <svg viewBox="0 0 24 26"><path fill="#fff" d="M0 1h16v13H8l-4 4v-4H0z" /><path stroke="#333a3e" stroke-width="1.200" d="M3 4.500h10M3 7.500h10M3 10.500h7" /><circle cx="15" cy="17" r="7.500" fill="#2b3135" stroke="#888d90" /></svg>
        <span class="count">6</span>
      </div>
      <span class="peek"></span>
    </footer>
  </div>
</template>

<style>
html, body { margin: 0; background: #fff; overflow: hidden; }
</style>

<style scoped>
* { box-sizing: border-box; }
.defs { position: absolute; width: 0; height: 0; }
svg { display: block; flex: none; }
.screen { width: 1214px; height: 683px; display: flex; flex-direction: column; overflow: hidden; font: 11.500px/1.2 "Open Sans", "Noto Sans", sans-serif; color: #32373c; background: #fff; white-space: nowrap; }

.tabs { height: 32px; background: #dee1e6; display: flex; align-items: center; flex: none; }
.tab-active { width: 57px; height: 32px; margin-left: 8px; background: #fff; border-radius: 6px 6px 0 0; display: flex; align-items: center; padding-left: 8px; }
.fav { width: 14.500px; height: 14.500px; }
.tab-x { width: 10px; height: 10px; margin-left: 14px; color: #3c4043; }
.tab { width: 55.150px; height: 18px; border-right: 1.500px solid #a2a5a9; display: flex; align-items: center; padding-left: 7px; }
.tab-label { margin-left: 8.500px; width: 20px; overflow: hidden; font-size: 11.500px; letter-spacing: -.2px; color: #50545a; -webkit-mask-image: linear-gradient(90deg, #000 55%, transparent); mask-image: linear-gradient(90deg, #000 55%, transparent); }
.newtab { width: 12px; height: 12px; margin-left: 15px; }
.winbtns { display: flex; gap: 32px; margin: -5px 15px 0 auto; }
.winbtns svg { width: 12px; height: 12px; }

.toolbar { height: 35px; display: flex; align-items: center; border-bottom: 1px solid #d5d7da; flex: none; }
.nav { width: 13px; height: 13px; fill: none; stroke: #5f6368; stroke-width: 1.600; }
.nav .solid { fill: #5f6368; stroke: none; }
.back { margin-left: 14px; }
.fwd { margin-left: 18px; stroke: #bcbec1; }
.reload { margin-left: 17px; width: 14px; height: 14px; }
.omnibox { margin-left: 13px; width: 998px; height: 27px; border-radius: 14px; background: #f1f3f4; display: flex; align-items: center; padding-left: 13px; }
.lock { width: 8.500px; height: 11px; }
.url { margin-left: 11px; margin-right: auto; font-size: 13px; letter-spacing: -.14px; color: #6a6e73; }
.url b { font-weight: 400; color: #2a2c2f; }
.omni-ic { width: 14px; height: 14px; margin-right: 16px; }
.omni-ic + .omni-ic { margin-right: 11px; }
.bag { width: 12px; height: 14px; margin-left: 14.500px; }
.tb-sep { width: 1px; height: 15px; background: #d0d2d5; margin-left: 14.500px; }
.profile { width: 21px; height: 21px; border-radius: 50%; background: #c2330c; color: #fff; margin-left: 11px; font: 11px/21px Roboto, sans-serif; text-align: center; }
.kebab { width: 13px; height: 13px; margin-left: 13px; color: #5f6368; }

.adminbar { height: 27px; background: #23282d; color: #eee; display: flex; align-items: center; font-size: 11px; flex: none; letter-spacing: -.29px; padding-top: 1px; }
.ab-wp { width: 17.500px; height: 17.500px; margin-left: 6px; color: #a0a5aa; }
.ab-home { width: 17px; height: 17px; margin-left: 12px; color: #a0a5aa; }
.ab-site { margin-left: 5.500px; width: 120px; }
.ab-com { width: 17px; height: 17px; margin-left: 12px; color: #a0a5aa; }
.ab-zero { color: #8f959a; margin-left: 5px; }
.ab-plus { width: 12px; height: 12px; margin-left: 16px; }
.ab-new { margin-left: 7px; width: 23px; }
.ab-view { margin-left: 12px; }
.ab-user { margin-left: auto; letter-spacing: -.15px; }
.ab-avatar { width: 15px; height: 15px; margin: 0 7px 0 5px; }

.workspace { height: 505px; display: flex; flex: none; }
.side { width: 31px; background: #23282d; color: #a0a5aa; padding-top: 10.500px; flex: none; }
.side-group { margin-bottom: 9.700px; }
.side-item { height: 28.900px; display: flex; align-items: center; padding-left: 6.700px; position: relative; }
.side-item svg { width: 16.500px; height: 16.500px; }
.side-item.hex svg { width: 19px; height: 19px; }
.on { background: #0073aa; color: #fff; }
.on::after { content: ""; position: absolute; right: 0; top: 10px; border: 4px solid transparent; border-right: 4px solid #fff; border-left: 0; }

.editor { flex: 1; min-width: 0; display: flex; flex-direction: column; }
.ed-head { height: 49px; display: flex; align-items: center; border-bottom: 1px solid #e2e4e7; color: #555d66; font-family: "Liberation Sans", sans-serif; padding-left: 13px; flex: none; }
.h-ic { width: 17px; height: 17px; margin: -1px 13.800px 0 0; }
.dim { color: #cdd0d4; }
.draft { color: #0073aa; margin-left: auto; margin-right: 21px; font-size: 11.500px; letter-spacing: -.1px; }
.btn { height: 28px; line-height: 26px; border-radius: 3px; border: 1px solid #0071a1; font-size: 11.500px; text-align: center; letter-spacing: -.1px; }
.preview { width: 62px; background: #f3f5f6; color: #0071a1; }
.update { width: 58px; margin-left: 5px; background: #007cba; border-color: #007cba; color: #fff; }
.gearbtn { width: 29px; height: 29px; margin-left: 11px; border-radius: 3px; background: #555d66; color: #fff; display: grid; place-items: center; }
.gearbtn svg { width: 17px; height: 17px; }
.h-dots { width: 17px; height: 17px; margin: 0 14px 0 11px; }

.ed-body { flex: 1; display: flex; min-height: 0; }
.canvas { width: 938px; overflow: hidden; flex: none; }
.notice { height: 50px; background: #fef8ee; border-left: 3px solid #f0b849; display: flex; align-items: center; padding-left: 10.500px; }
.notice-text { width: 370.500px; font-size: 11.500px; letter-spacing: -.48px; padding-top: 1px; }
.restore { width: 113px; height: 25px; border: 1px solid #0071a1; border-radius: 3px; background: #f3f5f6; color: #0071a1; text-align: center; line-height: 24px; font-size: 11.300px; letter-spacing: -.38px; }
.notice-x { width: 12px; height: 12px; margin: 0 16px 0 auto; color: #555d66; }
.title { margin: 2px 0 0 144px; font-size: 38px; line-height: 52px; font-weight: 700; letter-spacing: -.75px; color: #191e23; }
.block { position: relative; margin: 27px 0 0 131px; width: 608px; height: 330px; border-left: 2px solid #555d66; }
.mover { position: absolute; left: -33px; top: 24px; width: 26px; height: 63px; border: 1px solid #c2c7cc; border-radius: 3px; display: flex; flex-direction: column; align-items: center; justify-content: space-between; padding: 5px 0 4px; }
.mv-up, .mv-down { width: 11px; height: 11px; color: #555d66; }
.mv-up { color: #ccd0d4; }
.mv-grip { width: 10px; height: 6px; }
.b-tools { display: flex; width: 74px; height: 32px; border: 1px solid #b5bcc2; border-left: 0; color: #555d66; }
.b-type { width: 43px; border-right: 1px solid #b5bcc2; display: flex; align-items: center; padding-left: 7.500px; }
.b-bars { width: 16px; height: 16px; }
.caret { margin-left: 4px; border: 3px solid transparent; border-top: 4px solid #555d66; border-bottom: 0; }
.b-more { flex: 1; display: grid; place-items: center; }
.b-more svg { width: 16px; height: 17px; }
.b-box { height: 300px; border: 1px solid #c5cace; border-left: 0; padding: 0 11px 0 12px; }
.b-head { height: 69px; display: flex; align-items: flex-start; }
.b-logo { width: 40px; height: 34px; margin: 7px 0 0 7px; }
.b-title { width: 223px; text-align: right; margin-top: 15.500px; font-size: 20px; color: #111; letter-spacing: -.4px; }
.acc { border-top: 1px solid #f0f0f0; }
.acc-row { height: 54px; border: solid #e4e5e6; border-width: 0 1px 1px; display: flex; align-items: center; justify-content: space-between; padding: 0 24px 0 20px; font-size: 20px; color: #222; }
.acc-row svg { width: 12px; height: 12px; color: #6c6c6c; }

.menu { position: absolute; left: 39px; top: 36px; width: 222px; height: 271.500px; background: #fff; border: 1px solid #e2e4e7; box-shadow: 0 3px 27px rgba(25, 30, 35, .13); padding: 6.500px 1px 0; color: #40464d; }
.menu::before { content: ""; position: absolute; left: 13px; top: -6px; width: 10px; height: 10px; background: #fff; border: solid #e2e4e7; border-width: 1px 0 0 1px; transform: rotate(45deg); }
.m-item { height: 30.800px; display: flex; align-items: center; padding: 0 11px 0 6px; font-size: 11.500px; letter-spacing: -.41px; position: relative; }
.m-item svg { width: 16px; height: 16px; margin-right: 4.300px; }
.m-item .mi-gear { width: 17px; height: 17px; margin: 0 3.800px 0 -.5px; }
.m-item .mi-pages { width: 18px; height: 18px; margin: 0 3.300px 0 -1px; }
.m-item kbd { margin-left: auto; font: inherit; color: #7e8993; letter-spacing: -.14px; }
.focus::after { content: ""; position: absolute; inset: .5px 0; border: 1px dashed #777; }
.focus svg { color: #191e23; }
.m-rule { height: 1px; background: #e7e9eb; margin: 4.500px -1px 7px; }
.hover { height: 30px; background: #f3f4f5; }
.hover kbd { color: #40464d; }
.hover svg { color: #191e23; }

.scroll { width: 6px; background: #e1e1e1; flex: none; }
.scroll i { display: block; background: #b9b9b9; width: 6px; }
.main-scroll i { height: 88px; margin-top: 13px; }
.page-scroll i { height: 422px; }

.panel { width: 233px; border: solid #e2e4e7; border-width: 0 1px; overflow: hidden; flex: none; font-family: "Liberation Sans", sans-serif; }
.p-tabs { height: 42px; background: #f3f4f5; border-bottom: 1px solid #e2e4e7; display: flex; align-items: center; font-size: 10.200px; }
.p-doc { margin-left: 14px; width: 57px; letter-spacing: -.35px; }
.p-block { width: 51px; height: 42px; line-height: 41px; border-bottom: 3px solid #007cba; text-align: center; font-weight: 700; color: #191e23; letter-spacing: -.3px; }
.p-x { width: 12px; height: 12px; margin: -1px 12px 0 auto; color: #555d66; }
.p-card { height: 49px; border-bottom: 1px solid #edeff0; display: flex; color: #555d66; font-size: 10.200px; letter-spacing: -.32px; padding: 14.500px 0 0 18.500px; }
.p-card svg { width: 16.500px; height: 16.500px; margin: 2px 16px 0 0; }
.p-card svg + span { height: 14px; }
.p-settings { height: 325px; border-bottom: 1px solid #e9ebed; }
.p-title { height: 37px; display: flex; align-items: center; justify-content: space-between; padding: 0 12.500px 0 13px; color: #191e23; font-size: 11.400px; font-weight: 700; letter-spacing: -.22px; }
.p-title svg { width: 12px; height: 12px; }
.last { border-bottom: 1px solid #e2e4e7; height: 39px; letter-spacing: -.28px; }
.field { height: 63.800px; padding: 4px 12px 0 14px; font-family: "Open Sans", sans-serif; }
.field label { display: block; height: 18px; line-height: 17px; font-size: 11.500px; letter-spacing: -.5px; color: #6c757d; }
.ctl { height: 27px; border: 1px solid #7e8993; border-radius: 3px; display: flex; align-items: center; justify-content: space-between; padding: 0 6px 0 7px; font-size: 11.700px; letter-spacing: -.15px; color: #40464d; }
.ctl svg { width: 10px; height: 10px; }
.toggle-row { display: flex; align-items: center; margin: -10px 0 0 13px; font-family: "Open Sans", sans-serif; position: relative; }
.toggle { width: 32px; height: 16px; border-radius: 8px; background: #11a0d2; display: flex; align-items: center; justify-content: space-between; padding: 0 4px 0 7px; }
.toggle i { width: 2px; height: 6px; background: #fff; }
.toggle b { width: 10px; height: 10px; border-radius: 50%; background: #fff; }
.t-label { margin: -1px 0 0 13px; color: #6c757d; font-size: 11.500px; letter-spacing: -.55px; }

.downloads { height: 46px; border-top: 1px solid #d9dadc; display: flex; align-items: center; flex: none; background: #fff; padding-bottom: 1px; }
.d-file { width: 11px; height: 14px; margin: 0 0 1px 21px; }
.d-name { margin: 6px 0 0 14.500px; width: 143.500px; font-size: 12.300px; letter-spacing: -.2px; color: #4a4d51; }
.d-up { width: 10px; height: 10px; color: #6a6e73; margin-left: 1px; }
.d-sep { width: 1px; height: 34px; background: #c9cbce; margin-left: 17px; }
.d-show { margin-left: auto; width: 74px; height: 31px; border: 1px solid #dadce0; border-radius: 4px; text-align: center; line-height: 29px; font-size: 11.700px; letter-spacing: -.22px; color: #3c4043; }
.d-x { width: 12px; height: 12px; margin: 0 11px 0 11px; color: #6a6e73; }

.taskbar { height: 38px; background: #252b2f; display: flex; flex: none; color: #fff; }
.t-sys { width: 45.600px; display: grid; place-items: center; }
.t-sys svg { width: 16px; height: 16px; }
.t-apps { display: flex; margin-left: 2px; }
.t-app { width: 47.420px; display: grid; place-items: center; position: relative; }
.t-app svg { width: 22px; height: 22px; }
.open::after { content: ""; position: absolute; left: 4px; right: 4px; bottom: 0; height: 2px; background: #99c3f0; }
.cur { background: #4b5155; }
.cur::after { left: 0; right: 0; }
.tray { display: flex; margin: 0 -1px 0 auto; }
.tray span { width: 30.300px; display: grid; place-items: center; }
.tray svg { width: 16px; height: 16px; }
.clock { width: 66px; text-align: center; font-size: 11.500px; letter-spacing: -.3px; display: flex; flex-direction: column; justify-content: center; gap: 4px; line-height: 14px; padding-top: 1px; }
.notif { width: 46px; position: relative; padding: 9px 0 0 12px; }
.notif svg { width: 24px; height: 26px; }
.count { position: absolute; left: 23px; top: 19px; width: 8px; text-align: center; font-size: 10px; font-weight: 600; line-height: 14px; }
.peek { width: 5px; border-left: 1px solid #7b8083; }
</style>
